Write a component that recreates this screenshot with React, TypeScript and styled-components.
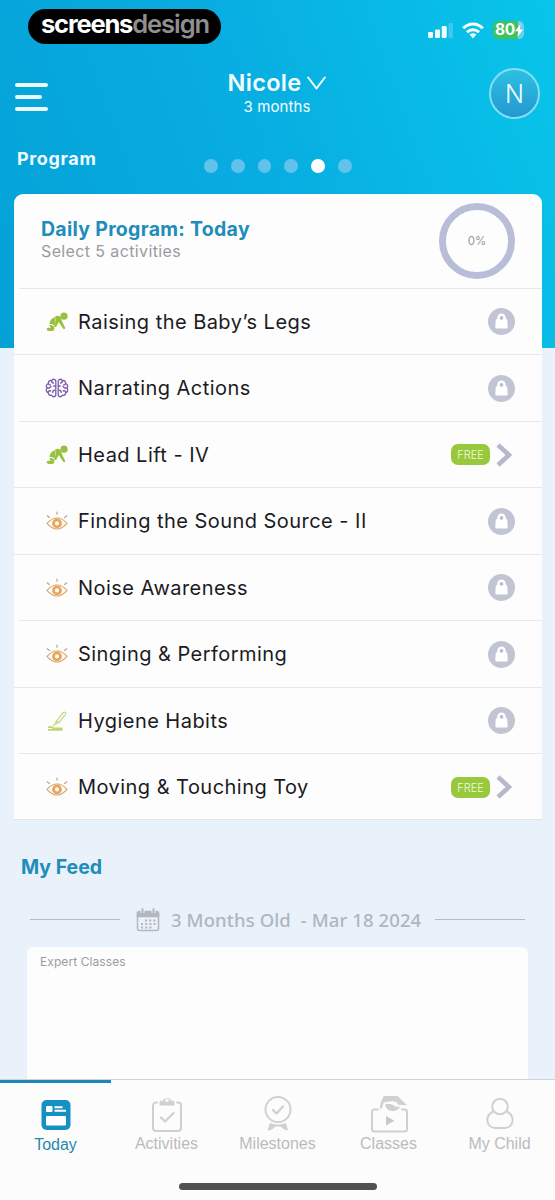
import React from "react";
import styled, { createGlobalStyle } from "styled-components";

const Global = createGlobalStyle`
  * { box-sizing: border-box; }
  html, body { margin: 0; padding: 0; background: #fdfcfd; }
  body { font-family: Inter, "Noto Sans", sans-serif; }
`;

const Screen = styled.div`
  width: 555px;
  height: 1200px;
  overflow: hidden;
  display: flex;
  flex-direction: column;
  white-space: nowrap;
  background:
    linear-gradient(70deg, #04a1d7 0%, #08ade1 48%, #08c5ea 100%) 0 0 / 100% 348px no-repeat,
    #e9f1fb;
`;

const StatusBar = styled.div`
  height: 58px;
  padding: 9px 31px 0 28px;
  display: flex;
  align-items: flex-start;
  justify-content: space-between;
`;

const Brand = styled.div`
  width: 193px;
  height: 35px;
  border-radius: 18px;
  background: #000;
  color: #fff;
  font-size: 25.5px;
  font-weight: 700;
  line-height: 30px;
  letter-spacing: -1.2px;
  padding-left: 13px;
`;

const BrandLight = styled.span`
  color: #8f8f8f;
  font-weight: 600;
  letter-spacing: -1.05px;
`;

const Indicators = styled.div`
  display: flex;
  align-items: center;
  gap: 9px;
  padding-top: 12px;
`;

const Battery = styled.div`
  width: 31px;
  height: 18px;
  border-radius: 5px;
  background: linear-gradient(90deg, #3cc35c 82%, #72cfe9 82%);
  color: #fff;
  font-size: 15.5px;
  font-weight: 700;
  line-height: 18px;
  letter-spacing: -0.4px;
  padding-left: 2px;
  display: flex;
  align-items: center;
`;

const TopBar = styled.header`
  height: 76px;
  padding: 10px 16px 0 15px;
  display: grid;
  grid-template-columns: 50px 1fr 50px;
  align-items: start;
  color: #f4feff;
`;

const Menu = styled.div`
  display: flex;
  flex-direction: column;
  gap: 8px;
  padding-top: 14.5px;
`;

const MenuLine = styled.span<{ $short?: boolean }>`
  width: ${(p) => (p.$short ? 27 : 33)}px;
  height: 4px;
  border-radius: 2px;
  background: #e8fbff;
`;

const ChildPicker = styled.div`
  display: flex;
  flex-direction: column;
  align-items: center;
`;

const ChildName = styled.div`
  display: flex;
  align-items: center;
  gap: 6px;
  font-size: 23.5px;
  font-weight: 600;
  line-height: 30px;
  letter-spacing: 0.3px;
`;

const ChildAge = styled.div`
  font-size: 15px;
  line-height: 18px;
  letter-spacing: 0.1px;
`;

const Avatar = styled.div`
  width: 51px;
  height: 51px;
  border-radius: 50%;
  border: 2px solid #7fe0f5;
  background: linear-gradient(#2cc0e2, #2398cf);
  font-size: 25px;
  font-weight: 300;
  line-height: 49px;
  text-align: center;
`;

const Section = styled.div`
  height: 60px;
  padding: 0 17px;
  display: grid;
  grid-template-columns: 187px 1fr;
`;

const SectionTitle = styled.h2`
  margin: 14px 0 0;
  font-size: 18px;
  font-weight: 700;
  line-height: 22px;
  letter-spacing: 0.65px;
  color: #eefcff;
`;

const Dots = styled.div`
  display: flex;
  gap: 13px;
  padding-top: 25px;
`;

const Dot = styled.span<{ $on?: boolean }>`
  width: 13.8px;
  height: 13.8px;
  border-radius: 50%;
  background: ${(p) => (p.$on ? "#fff" : "#62c2ec")};
`;

const Card = styled.section`
  margin: 0 13px 0 14px;
  height: 626px;
  border-radius: 9px 9px 0 0;
  background: #fdfdfe;
  border-bottom: 1px solid #e2e3ea;
`;

const CardHead = styled.div`
  height: 93.5px;
  padding: 9px 27px 0 27px;
  display: flex;
  justify-content: space-between;
`;

const CardTitle = styled.div`
  margin-top: 14px;
  font-size: 19.5px;
  font-weight: 700;
  line-height: 24px;
  letter-spacing: 0.28px;
  color: #1e8dba;
`;

const CardSub = styled.div`
  font-size: 16px;
  line-height: 20px;
  letter-spacing: 0.38px;
  color: #9b9b9e;
`;

const Ring = styled.div`
  width: 76px;
  height: 76px;
  border-radius: 50%;
  border: 7.5px solid #b9bed8;
  display: flex;
  align-items: center;
  justify-content: center;
  font-size: 11.5px;
  color: #98989c;
`;

const Row = styled.div<{ $inset?: boolean }>`
  height: 66.5px;
  padding: 2px 27px 0 31px;
  display: grid;
  grid-template-columns: 33px 1fr auto;
  align-items: center;
  background: linear-gradient(#e9e7ea, #e9e7ea) ${(p) => (p.$inset ? 5 : 0)}px 0 / 100% 1px no-repeat;
`;

const RowLabel = styled.div`
  font-size: 20px;
  line-height: 26px;
  letter-spacing: 0.46px;
  color: #1b1b1e;
`;

const FreeGroup = styled.div`
  display: flex;
  align-items: center;
  gap: 6px;
  margin-right: 3px;
`;

const FreeBadge = styled.span`
  width: 39px;
  height: 21px;
  border-radius: 7px;
  background: #98c93c;
  color: #f2fadf;
  font-size: 11px;
  font-weight: 300;
  line-height: 22px;
  text-align: center;
`;

const FeedTitle = styled.h2`
  margin: 35px 0 0 21px;
  font-size: 19.5px;
  font-weight: 700;
  line-height: 24px;
  color: #1e8dba;
`;

const DateLine = styled.div`
  margin: 27.5px 30px 0 30px;
  height: 26px;
  display: flex;
  align-items: center;
`;

const Rule = styled.span`
  flex: none;
  width: 90px;
  height: 1.5px;
  background: #b4bbc4;
`;

const DateText = styled.span`
  font-family: "Noto Sans", sans-serif;
  font-size: 18.5px;
  font-weight: 500;
  line-height: 26px;
  letter-spacing: 0.1px;
  color: #b0b6be;
  flex: 1;
  padding-left: 11px;
  white-space: pre;
`;

const CalendarSlot = styled.span`
  display: flex;
  margin-left: 16px;
`;

const FeedCard = styled.section`
  margin: 14.5px 27px 0;
  flex: 1;
  border-radius: 6px 6px 0 0;
  background: #fdfdfe;
  padding: 7px 13px;
  font-size: 12px;
  line-height: 16px;
  letter-spacing: 0.08px;
  color: #9c9c9f;
`;

const TabBar = styled.nav`
  height: 121px;
  flex: none;
  background: #fdfcfd;
  border-top: 1px solid #d2d2d5;
  display: flex;
  flex-direction: column;
  align-items: center;
`;

const Tabs = styled.div`
  display: grid;
  grid-template-columns: repeat(5, 111px);
  height: 102.5px;
`;

const Tab = styled.div<{ $active?: boolean }>`
  border-top: 3px solid ${(p) => (p.$active ? "#1d87b4" : "transparent")};
  display: flex;
  flex-direction: column;
  align-items: center;
  padding-top: ${(p) => (p.$active ? 14 : 13)}px;
  font-family: "Liberation Sans", Arial, sans-serif;
  font-size: 16px;
  line-height: 20px;
  letter-spacing: 0;
  color: ${(p) => (p.$active ? "#2589a9" : "#babbbd")};
`;

const TabLabel = styled.span<{ $active?: boolean }>`
  margin-top: ${(p) => (p.$active ? 4 : 1)}px;
`;

const HomeBar = styled.div`
  width: 198px;
  height: 7px;
  border-radius: 4px;
  background: #51514f;
`;

const BabyIcon = () => (
  <svg width="24" height="20" viewBox="0 0 24 20" fill="#98c13c">
    <circle cx="19" cy="4.200" r="3.600" />
    <path d="M10.400 4.600C12.600 3.200 15 3.800 16 6l1 3.200 3 6.200c.7 1.600-1.200 2.300-2 1l-4.300-6.300-2.500 4.600c-.8.800-2.300.2-2-1l1.600-5c.1-1.800-.3-3-1.200-3.600z" />
    <path d="M9.400 5.200C6.200 6.400 4.600 9 4.500 12c2-.4 3.800.2 5 1.600l1-5c.1-1.600-.2-2.700-1.100-3.400z" />
    <path d="M4.500 13c2.200-.2 3.600.4 4.600 1.900.9 2-.2 4-2.200 4H4c-2.800 0-3-3.200-.4-3.100h2z" />
  </svg>
);

const BrainIcon = () => (
  <svg width="24" height="20" viewBox="0 0 26 20" preserveAspectRatio="none" fill="none" stroke="#7d5bab" strokeWidth="1.400" strokeLinecap="round" strokeLinejoin="round">
    {[false, true].map((flip) => (
      <g key={String(flip)} transform={flip ? "translate(26 0) scale(-1 1)" : undefined}>
        <path d="M11.700 3C10.700.6 7.800.8 7.200 2.800 5 2 3.200 3.600 3.800 5.600 1.400 6.200.8 8.600 2.200 10 .6 11.800 1.400 14 3.400 14.600c0 2 2 3.200 3.800 2.600 1 2 3.700 2 4.500 0z" />
        <path d="M7.200 2.800c0 1.400.8 2.200 2 2.200M3.800 5.600c.2 1 1 1.400 2 1.400M2.200 10h2.600l1.800-1.600M11.500 8H9.400M3.400 14.600c.2-1.600 1.600-2.200 2.800-1.600M8.400 14.600c0-1.600.8-2.400 2-2.400" />
      </g>
    ))}
  </svg>
);

const EyeIcon = () => (
  <svg width="24" height="20" viewBox="0 0 24 20" fill="none" stroke="#d9a968" strokeWidth="1.200" strokeLinecap="round">
    <path d="M12 1v2.200M2.200 4.800l2.200 1.700M21.800 4.800l-2.200 1.700" stroke="#b5a88f" />
    <path d="M2 12.400C5 8.800 8.400 7 12 7s7 1.800 10 5.400C19 16 15.600 18 12 18S5 16 2 12.400z" />
    <circle cx="12" cy="12.400" r="3.500" stroke="#eba55a" strokeWidth="2.800" />
    <circle cx="12" cy="12.400" r="1.100" fill="#fff" stroke="none" />
  </svg>
);

const BrushIcon = () => (
  <svg width="24" height="22" viewBox="0 0 24 22" fill="none" stroke="#b9d377" strokeWidth="1.100" strokeLinejoin="round">
    <path d="M11.500 11L18 2.800c1.400-1.600 3.600 0 2.400 1.700L14 12.600zM11.500 11l-1.300 3L14 12.600M9.800 14.600l-2 .6" />
    <path d="M3 17.200h4l2 1.200h8.500M3 19.800h14.500" stroke="#bcd968" strokeWidth="1.700" />
  </svg>
);

const LockIcon = () => (
  <svg width="27" height="27" viewBox="0 0 27 27">
    <circle cx="13.500" cy="13.500" r="13.500" fill="#c1c4d2" />
    <path d="M9.200 11V9.800a4.300 4.300 0 0 1 8.600 0V11c1 .1 1.400.6 1.500 1.500l.4 6.200c.1 1.200-.4 1.800-1.600 1.800H8.900c-1.200 0-1.700-.6-1.600-1.800l.4-6.200c.1-.9.500-1.400 1.500-1.500z" fill="#fff" />
    <circle cx="13.500" cy="9.900" r="1.800" fill="#b7bac9" />
  </svg>
);

const Chevron = () => (
  <svg width="16" height="24" viewBox="0 0 16 24" fill="none" stroke="#b6b9cb" strokeWidth="4.500">
    <path d="M2 2l11 10L2 22" />
  </svg>
);

const CalendarIcon = () => (
  <svg width="24" height="24" viewBox="0 0 24 24" fill="none" stroke="#b4b7bd" strokeWidth="1.500">
    <rect x="1.500" y="3.500" width="21" height="19" rx="2" />
    <path d="M1.500 4.500h21v4h-21z" fill="#b4b7bd" />
    <path d="M6.500 0v5M17.500 0v5" stroke="#e9f1fb" strokeWidth="4" />
    <path d="M6.500.5v5M17.500.5v5" strokeWidth="2" />
    <path d="M9 12.500h11M5 16h15M5 19.500h11" strokeWidth="2" strokeDasharray="2 2.200" />
  </svg>
);

const TodayIcon = () => (
  <svg width="30" height="34" viewBox="0 0 30 34">
    <rect x=".5" y="3" width="29" height="30" rx="5" fill="#1590c3" />
    <rect x="5" y="9" width="6.500" height="6" rx="1" fill="#fff" />
    <path d="M13.500 10.200h8M13.500 13.800h11.500" stroke="#fff" strokeWidth="1.900" />
    <rect x="5" y="19" width="20" height="9.500" rx="1.200" fill="#fff" />
  </svg>
);

const ActivitiesIcon = () => (
  <svg width="30" height="37" viewBox="0 0 30 37" fill="none" stroke="#d0d0d2" strokeWidth="2" strokeLinecap="round" strokeLinejoin="round">
    <path d="M5 6.500H4a3 3 0 0 0-3 3V32a3 3 0 0 0 3 3h22a3 3 0 0 0 3-3V9.500a3 3 0 0 0-3-3h-1" />
    <path d="M8.500 8.500V5.800h3a3.600 3.600 0 0 1 7 0h3v2.700z" fill="#d0d0d2" />
    <circle cx="15" cy="4.300" r="1.800" fill="#fdfcfd" stroke="none" />
    <path d="M9 21.500l4 4 8.500-8.500" strokeWidth="2.300" />
  </svg>
);

const MilestonesIcon = () => (
  <svg width="30" height="37" viewBox="0 0 30 37" fill="none" stroke="#d0d0d2" strokeWidth="2" strokeLinecap="round" strokeLinejoin="round">
    <circle cx="15" cy="13.500" r="12.500" />
    <path d="M10 14l3.500 3.500 6.500-7" strokeWidth="2.300" />
    <path d="M7.500 27.500c4.500 2 10.500 2 15 0l2 6.500-4.500-1.500-2-2.500h-6l-2 2.500L5.500 34z" fill="#d0d0d2" strokeWidth="1" />
  </svg>
);

const ClassesIcon = () => (
  <svg width="38" height="37" viewBox="0 0 38 37" fill="none" stroke="#d0d0d2" strokeWidth="2" strokeLinecap="round" strokeLinejoin="round">
    <path d="M8 13.500H4.500A2.500 2.500 0 0 0 2 16v17a2.500 2.500 0 0 0 2.500 2.500h30A2.500 2.500 0 0 0 37 33V16a2.500 2.500 0 0 0-2.500-2.500H32" />
    <path d="M13.500 0h14L37 9.200l-9-.4c-.2-2.300-3-3.600-6-3.600-4 0-7 .8-9.500 2z" fill="#d0d0d2" stroke="none" />
    <path d="M14 2.500c-1.500 2.500-2.500 5-3 9" strokeWidth="2.500" />
    <path d="M15 8.500c3-1.500 8-.5 10 2l5 .3c-1.500 3-4 4.200-7.500 4.200-3.500 0-6.500-2-7.500-6.500z" fill="#d0d0d2" stroke="none" />
    <path d="M16 20v9.500l8.500-4.750z" fill="#c9c9cb" stroke="none" />
  </svg>
);

const ChildIcon = () => (
  <svg width="28" height="37" viewBox="0 0 28 37" fill="none" stroke="#d0d0d2" strokeWidth="2">
    <circle cx="14" cy="10.500" r="7.800" />
    <path d="M7.200 15.500C3.500 17.500 1.300 20.500 1.300 24c0 5 4 8 8.200 8h9c4.200 0 8.200-3 8.200-8 0-3.500-2.200-6.500-5.900-8.500" />
  </svg>
);

const icons = { baby: BabyIcon, brain: BrainIcon, eye: EyeIcon, brush: BrushIcon };

const activities: { icon: keyof typeof icons; label: string; free?: boolean; inset?: boolean }[] = [
  { icon: "baby", label: "Raising the Baby’s Legs", inset: true },
  { icon: "brain", label: "Narrating Actions" },
  { icon: "baby", label: "Head Lift - IV", free: true, inset: true },
  { icon: "eye", label: "Finding the Sound Source - II" },
  { icon: "eye", label: "Noise Awareness" },
  { icon: "eye", label: "Singing & Performing", inset: true },
  { icon: "brush", label: "Hygiene Habits" },
  { icon: "eye", label: "Moving & Touching Toy", free: true, inset: true },
];

const tabs = [
  { label: "Today", Icon: TodayIcon, active: true },
  { label: "Activities", Icon: ActivitiesIcon },
  { label: "Milestones", Icon: MilestonesIcon },
  { label: "Classes", Icon: ClassesIcon },
  { label: "My Child", Icon: ChildIcon },
];

export default function App() {
  return (
    <Screen>
      <Global />
      <StatusBar>
        <Brand>screens<BrandLight>design</BrandLight></Brand>
        <Indicators>
          <svg width="25" height="16" viewBox="0 0 25 16" fill="#f2fdff">
            <rect x="0" y="10" width="5" height="6" rx="1.300" />
            <rect x="7" y="7.500" width="5" height="8.500" rx="1.300" />
            <rect x="13.700" y="4" width="5" height="12" rx="1.300" />
            <rect x="20.500" y="1" width="4.500" height="15" rx="1.300" fill="#3fc8ee" />
          </svg>
          <svg width="22" height="17" viewBox="0 0 22 17" fill="none" stroke="#f2fdff" strokeWidth="3">
            <path d="M1.200 6.300C6.800.6 15.200.6 20.800 6.300M5 10.300c3.400-3.400 8.600-3.400 12 0" />
            <path d="M7.600 12.600c2-1.800 4.800-1.800 6.800 0L11 16.500z" fill="#f2fdff" stroke="none" />
          </svg>
          <Battery>
            80
            <svg width="8" height="13" viewBox="0 0 8 13" fill="#fff"><path d="M5.500 0L0 7.300h3.200L2.500 13 8 5.500H4.800z" /></svg>
          </Battery>
        </Indicators>
      </StatusBar>
      <TopBar>
        <Menu><MenuLine /><MenuLine $short /><MenuLine /></Menu>
        <ChildPicker>
          <ChildName>
            Nicole
            <svg width="19" height="14" viewBox="0 0 19 14" fill="none" stroke="#f4feff" strokeWidth="2" strokeLinecap="round" strokeLinejoin="round"><path d="M1.200 1.500l8.300 11 8.300-11" /></svg>
          </ChildName>
          <ChildAge>3 months</ChildAge>
        </ChildPicker>
        <Avatar>N</Avatar>
      </TopBar>
      <Section>
        <SectionTitle>Program</SectionTitle>
        <Dots>{[0, 1, 2, 3, 4, 5].map((i) => <Dot key={i} $on={i === 4} />)}</Dots>
      </Section>
      <Card>
        <CardHead>
          <div>
            <CardTitle>Daily Program: Today</CardTitle>
            <CardSub>Select 5 activities</CardSub>
          </div>
          <Ring>0%</Ring>
        </CardHead>
        {activities.map(({ icon, label, free, inset }) => {
          const Icon = icons[icon];
          return (
            <Row key={label} $inset={inset}>
              <Icon />
              <RowLabel>{label}</RowLabel>
              {free ? <FreeGroup><FreeBadge>FREE</FreeBadge><Chevron /></FreeGroup> : <LockIcon />}
            </Row>
          );
        })}
      </Card>
      <FeedTitle>My Feed</FeedTitle>
      <DateLine>
        <Rule />
        <CalendarSlot><CalendarIcon /></CalendarSlot>
        <DateText>{"3 Months Old  - Mar 18 2024"}</DateText>
        <Rule />
      </DateLine>
      <FeedCard>Expert Classes</FeedCard>
      <TabBar>
        <Tabs>
          {tabs.map(({ label, Icon, active }) => (
            <Tab key={label} $active={active}>
              <Icon />
              <TabLabel $active={active}>{label}</TabLabel>
            </Tab>
          ))}
        </Tabs>
        <HomeBar />
      </TabBar>
    </Screen>
  );
}
